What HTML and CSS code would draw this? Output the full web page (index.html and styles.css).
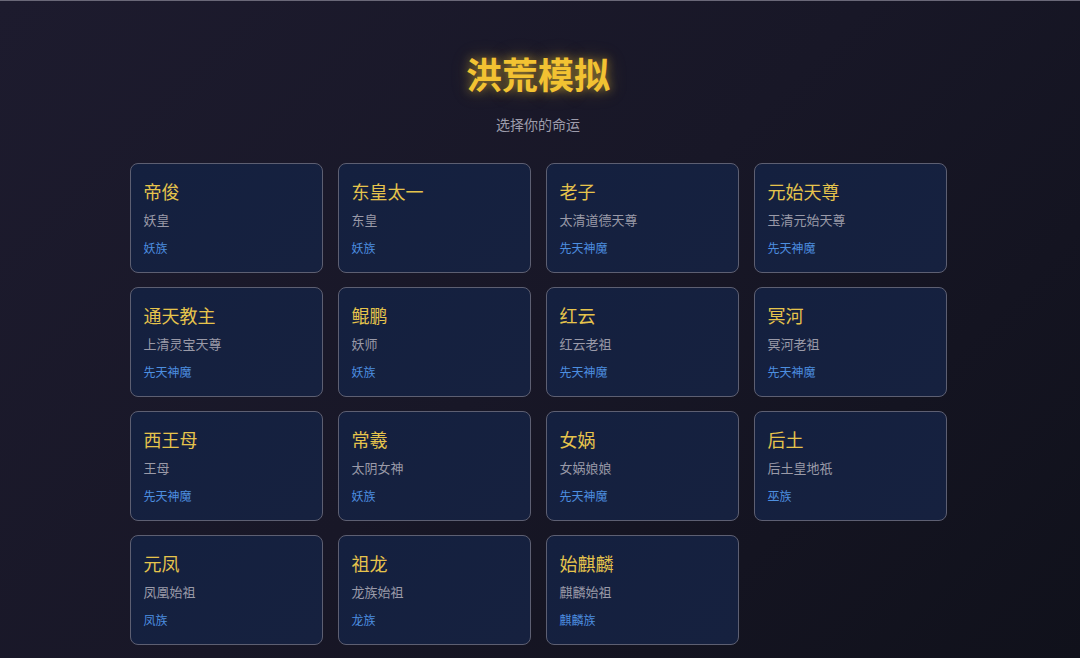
FILE: index.html
```html
<!DOCTYPE html>
<html lang="zh-CN">
<head>
<meta charset="utf-8">
<title>洪荒模拟</title>
<link rel="stylesheet" href="styles.css">
</head>
<body>
<div class="page">
  <header class="header">
    <h1 class="title">洪荒模拟</h1>
    <p class="subtitle">选择你的命运</p>
  </header>
  <main class="grid">
    <div class="card"><div class="name">帝俊</div><div class="role">妖皇</div><div class="tag">妖族</div></div>
    <div class="card"><div class="name">东皇太一</div><div class="role">东皇</div><div class="tag">妖族</div></div>
    <div class="card"><div class="name">老子</div><div class="role">太清道德天尊</div><div class="tag">先天神魔</div></div>
    <div class="card"><div class="name">元始天尊</div><div class="role">玉清元始天尊</div><div class="tag">先天神魔</div></div>
    <div class="card"><div class="name">通天教主</div><div class="role">上清灵宝天尊</div><div class="tag">先天神魔</div></div>
    <div class="card"><div class="name">鲲鹏</div><div class="role">妖师</div><div class="tag">妖族</div></div>
    <div class="card"><div class="name">红云</div><div class="role">红云老祖</div><div class="tag">先天神魔</div></div>
    <div class="card"><div class="name">冥河</div><div class="role">冥河老祖</div><div class="tag">先天神魔</div></div>
    <div class="card"><div class="name">西王母</div><div class="role">王母</div><div class="tag">先天神魔</div></div>
    <div class="card"><div class="name">常羲</div><div class="role">太阴女神</div><div class="tag">妖族</div></div>
    <div class="card"><div class="name">女娲</div><div class="role">女娲娘娘</div><div class="tag">先天神魔</div></div>
    <div class="card"><div class="name">后土</div><div class="role">后土皇地祇</div><div class="tag">巫族</div></div>
    <div class="card"><div class="name">元凤</div><div class="role">凤凰始祖</div><div class="tag">凤族</div></div>
    <div class="card"><div class="name">祖龙</div><div class="role">龙族始祖</div><div class="tag">龙族</div></div>
    <div class="card"><div class="name">始麒麟</div><div class="role">麒麟始祖</div><div class="tag">麒麟族</div></div>
  </main>
</div>
</body>
</html>
```
FILE: styles.css
```css
html, body {
  margin: 0;
  padding: 0;
}
body {
  min-height: 100vh;
  background: linear-gradient(135deg, #1d1b2e 0%, #181727 50%, #10111b 100%);
  border-top: 1px solid #6a6878;
  font-family: "Noto Sans CJK SC", "Noto Sans", sans-serif;
  color: #9c9cab;
}
.page {
  display: flex;
  flex-direction: column;
  align-items: center;
  padding-right: 4px;
}
.header {
  padding-top: 48px;
  text-align: center;
}
.title {
  margin: 0;
  font-size: 36px;
  line-height: 48px;
  font-weight: 700;
  color: #f2c232;
  text-shadow: 0 0 10px rgba(242, 194, 50, 0.55), 0 0 20px rgba(242, 194, 50, 0.25);
}
.subtitle {
  margin: 17px 0 0;
  font-size: 14px;
  line-height: 20px;
  color: #9d9cab;
}
.grid {
  margin-top: 29px;
  display: grid;
  grid-template-columns: repeat(4, 193px);
  column-gap: 15px;
  row-gap: 14px;
}
.card {
  box-sizing: border-box;
  height: 110px;
  padding: 15px 13px;
  background: linear-gradient(135deg, #14203f 0%, #16213f 100%);
  border: 1px solid #5d5f72;
  border-radius: 8px;
}
.name {
  font-size: 18px;
  line-height: 24px;
  color: #e6c44c;
  margin-bottom: 6px;
}
.role {
  font-size: 13px;
  line-height: 22px;
  color: #9a9aa8;
}
.tag {
  margin-top: 8px;
  font-size: 12px;
  line-height: 18px;
  color: #4d8fe0;
}
```
